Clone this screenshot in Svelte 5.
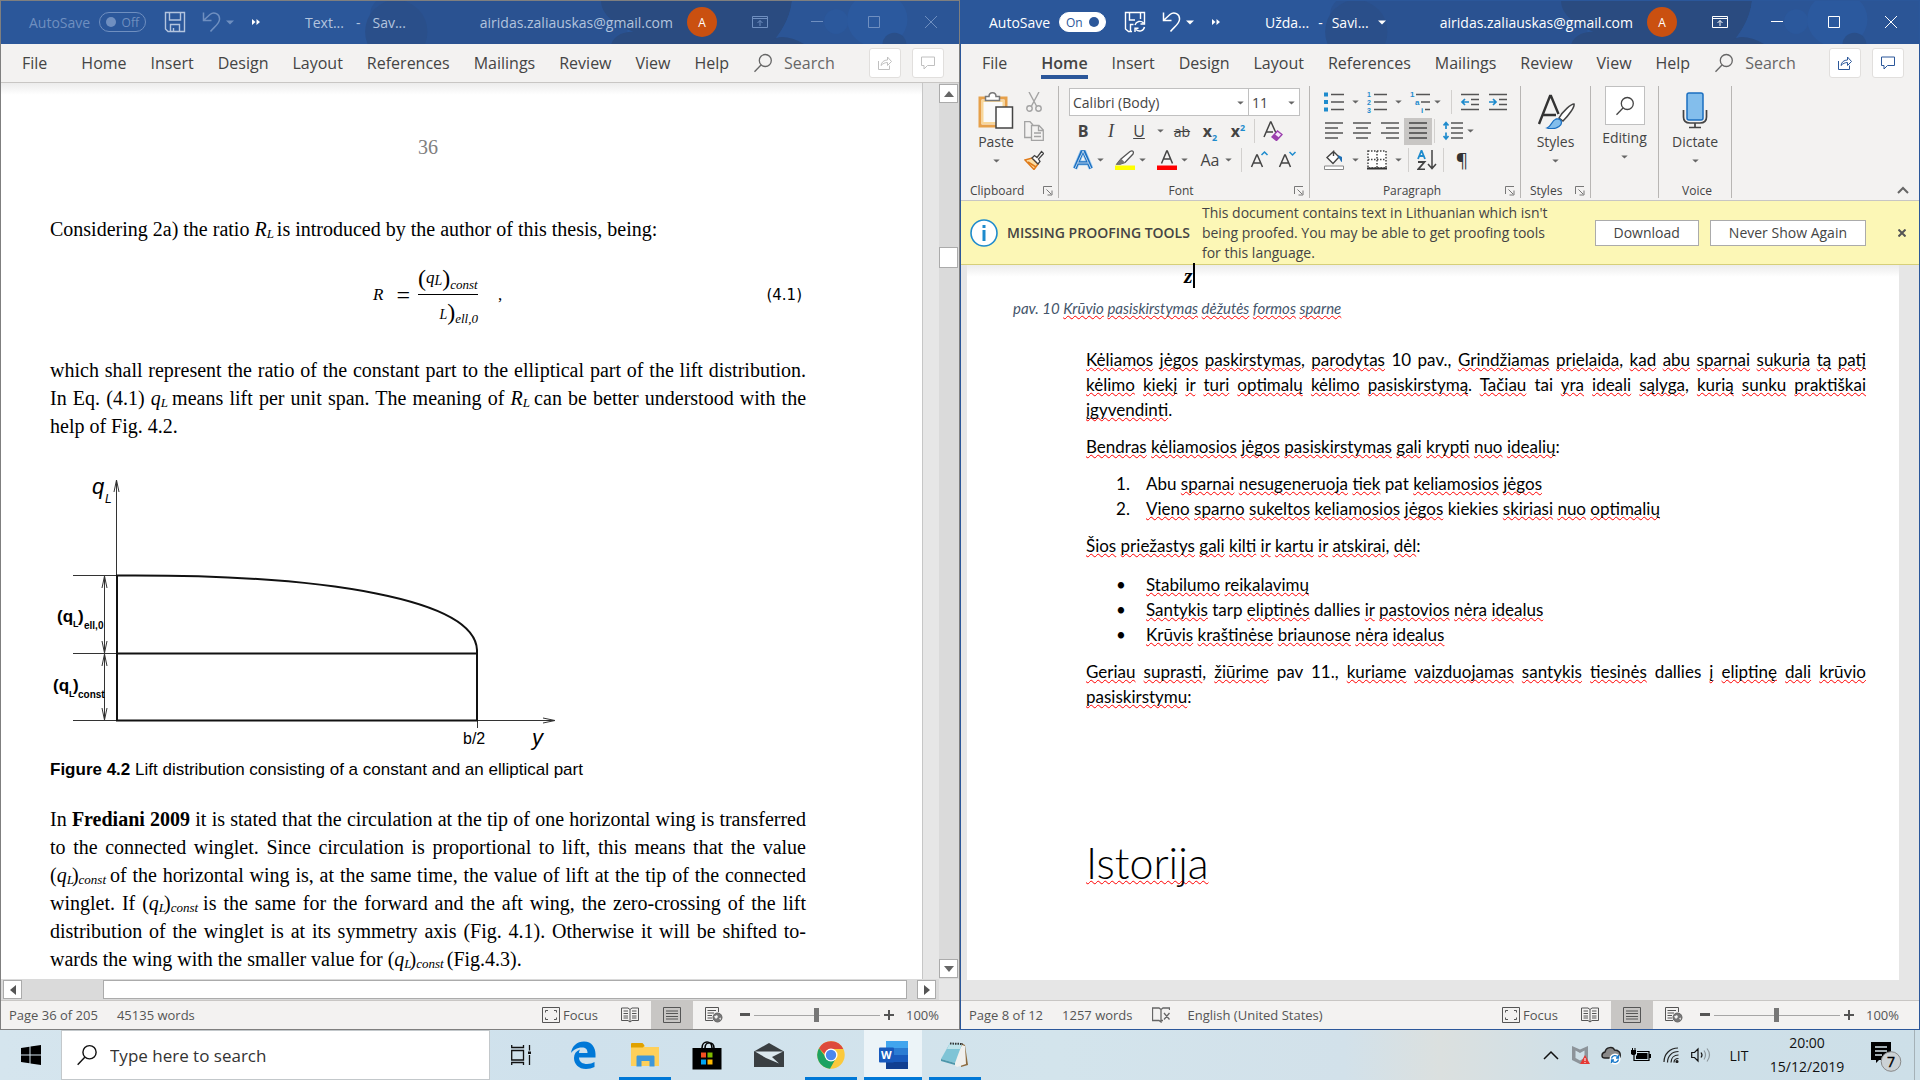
<script>
  const tabs = ['File', 'Home', 'Insert', 'Design', 'Layout', 'References', 'Mailings', 'Review', 'View', 'Help'];

  const intro = [
    '[Kėliamos] [jėgos] [paskirstymas], [parodytas] 10 pav., [Grindžiamas] [prielaida], [kad] [abu] [sparnai] [sukuria] [tą] [patį]',
    '[kėlimo] [kiekį] [ir] [turi] [optimalų] [kėlimo] [pasiskirstymą]. [Tačiau] tai [yra] [ideali] [sąlyga], [kurią] [sunku] [praktiškai]',
    '[įgyvendinti].'
  ];
  const numbered = [
    'Abu [sparnai] [nesugeneruoja] [tiek] pat [keliamosios] [jėgos]',
    '[Vieno] [sparno] [sukeltos] [keliamosios] [jėgos] kiekies [skiriasi] [nuo] [optimalių]'
  ];
  const bullets = [
    '[Stabilumo] [reikalavimų]',
    '[Santykis] tarp [eliptinės] dallies [ir] [pastovios] [nėra] [idealus]',
    '[Krūvis] [kraštinėse] [briaunose] [nėra] [idealus]'
  ];
  const closing = [
    '[Geriau] [suprasti], [žiūrime] pav 11., [kuriame] [vaizduojamas] [santykis] [tiesinės] dallies [į] [eliptinę] [dali] [krūvio]',
    '[pasiskirstymu]:'
  ];

  let leftZoom = $state(50);
  let rightZoom = $state(50);
</script>

{#snippet marked(text)}{#each text.split(/[\[\]]/) as part, i}{#if i % 2}<span class="err">{part}</span>{:else}{part}{/if}{/each}{/snippet}

{#snippet caret()}<svg class="caret" viewBox="0 0 8 5" width="8" height="5" aria-hidden="true"><path d="M0 0.5h8L4 4.5z" fill="currentColor" /></svg>{/snippet}

{#snippet lens(size)}<svg viewBox="0 0 20 20" width={size} height={size} aria-hidden="true"><circle cx="12.3" cy="7.5" r="6" fill="none" stroke="currentColor" stroke-width="1.3" /><path d="M8 12 1.5 18.8" stroke="currentColor" stroke-width="1.3" /></svg>{/snippet}

{#snippet titlebar(active, name, state)}
  <header class="title" class:idle={!active}>
    <svg class="art" viewBox="0 0 620 42" preserveAspectRatio="none" aria-hidden="true">
      <rect width="620" height="42" fill="#2b579a" />
      <path d="M40 0C70 -8 180 -8 290 0V42H60C30 25 30 10 40 0Z" fill="#2a5291" />
      <circle cx="60" cy="30" r="31" fill="#2a4f8a" />
      <path d="M264 0H454C452 18 442 32 434 42H274C278 32 288 30 296 30 280 24 264 14 264 0Z" fill="#2a4b80" />
      <path d="M430 42C440 30 456 36 466 40L466 42Z" fill="#2a4b80" />
      <path d="M454 0H620V42H466C456 36 446 34 438 36 446 26 453 14 454 0Z" fill="#2b5596" />
      <circle cx="498" cy="20" r="12" fill="#2b589c" />
      <ellipse cx="539" cy="18" rx="30" ry="27" fill="#2b599e" />
      <circle cx="556" cy="43" r="12" fill="#2a4f89" />
    </svg>
    <span class="autosave">AutoSave</span>
    <button class="toggle" class:on={active} aria-label="AutoSave">
      {#if active}<span>On</span><i></i>{:else}<i></i><span>Off</span>{/if}
    </button>
    <button class="save" aria-label="Save">
      {#if active}
        <svg viewBox="0 0 22 22" width="22" height="22"><path d="M8 20.5H4.5L1.500 18V1.500H20.500V9M5.500 1.500V9H11M16.500 1.500V8M6.500 20V13.500H9.500" fill="none" stroke="currentColor" stroke-width="1.400" /><path d="M11 14A5 5 0 0 1 19.500 12M20.500 9V13H16.500M20.500 16A5 5 0 0 1 12 18.500M11 21V17.300H14.500" fill="none" stroke="currentColor" stroke-width="1.400" /></svg>
      {:else}
        <svg viewBox="0 0 22 22" width="22" height="22"><path d="M1.500 1.500H20.500V20.500H4L1.500 18ZM5.500 1.500V9H16.500V1.500M6.500 20.500V13.500H15.500V20.500M9.500 17V20" fill="none" stroke="currentColor" stroke-width="1.400" /></svg>
      {/if}
    </button>
    <button class="undo" aria-label="Undo">
      <svg viewBox="0 0 20 22" width="20" height="22"><path d="M1.500 1.500V9.500H9.500M2 9 8 3.500C12 0 18 3 17.500 8.500 17.200 13 12 16 8.500 20.500" fill="none" stroke="currentColor" stroke-width="1.500" /></svg>
      {@render caret()}
    </button>
    <button class="more" aria-label="More commands">
      <svg viewBox="0 0 8 6" width="8" height="6"><path d="M0 0 3.500 3 0 6ZM4.500 0 8 3 4.500 6Z" fill="#fff" /></svg>
    </button>
    <span class="docname"><span>{name}</span><span>-</span><span>{state}</span>{#if active}{@render caret()}{/if}</span>
    <span class="account">airidas.zaliauskas@gmail.com</span>
    <span class="avatar">A</span>
    <span class="controls">
      <button aria-label="Ribbon display options"><svg viewBox="0 0 16 12" width="16" height="12"><path d="M.5.5H15.500V11.500H.5ZM.5 2.500H15.500M8 10V4.500M5.500 7 8 4.500 10.500 7" fill="none" stroke="currentColor" /></svg></button>
      <button aria-label="Minimize"><svg viewBox="0 0 12 12" width="12" height="12"><path d="M0 5.500H12" stroke="currentColor" /></svg></button>
      <button aria-label="Maximize"><svg viewBox="0 0 12 12" width="12" height="12"><path d="M.5.5H11.500V11.500H.5Z" fill="none" stroke="currentColor" /></svg></button>
      <button aria-label="Close"><svg viewBox="0 0 12 12" width="12" height="12"><path d="M0 0 12 12M12 0 0 12" stroke="currentColor" /></svg></button>
    </span>
  </header>
{/snippet}

{#snippet tabrow(active)}
  <nav class="tabs" class:live={active}>
    {#each tabs as tab}
      <button class="tab" class:file={tab === 'File'} class:current={active && tab === 'Home'}>{tab}</button>
    {/each}
    <button class="find">{@render lens(20)}<span>Search</span></button>
    <button class="chip share" aria-label="Share"><svg viewBox="0 0 16 16" width="16" height="16"><path d="M1.500 6V14.500H12.500V10.500M4 10.500C4.500 7 7 5 10.500 5V2L14.500 6.500 10.500 10.500V7.500C8 7.500 6 8.500 4 10.500Z" fill="none" stroke="currentColor" /></svg></button>
    <button class="chip" aria-label="Comments"><svg viewBox="0 0 16 16" width="16" height="16"><path d="M1.500 2H14.500V10.500H7.500L4 14V10.500H1.500Z" fill="none" stroke="currentColor" /></svg></button>
  </nav>
{/snippet}

{#snippet viewbar(kind)}
  <div class="views">
    <button class="focus"><svg viewBox="0 0 18 16" width="18" height="16"><path d="M.5.5H17.500V15.500H.5Z" fill="none" stroke="currentColor" /><path d="M3.500 5.500V3.500H6M12 3.500H14.500V5.500M14.500 10.500V12.500H12M6 12.500H3.500V10.500" fill="none" stroke="currentColor" /></svg>Focus</button>
    <button class="view" aria-label="Read mode"><svg viewBox="0 0 18 16" width="18" height="16"><path d="M9 2.500 7 1H.5V13.500H7L9 15 11 13.500H17.500V1H11L9 2.500V15M2.500 4H7M2.500 6.500H7M2.500 9H7M2.500 11H7M11 4H15.500M11 6.500H15.500M11 9H15.500M11 11H15.500" fill="none" stroke="currentColor" /></svg></button>
    <button class="view picked" aria-label="Print layout"><svg viewBox="0 0 18 16" width="18" height="16"><path d="M.5.5H17.500V15.500H.5ZM3 4H15M3 6.500H15M3 9.500H15M3 12H15" fill="none" stroke="currentColor" /></svg></button>
    <button class="view" aria-label="Web layout"><svg viewBox="0 0 18 16" width="18" height="16"><path d="M8 13.500H.5V.5H13.500V5M2.500 3.500H11M2.500 6H9M2.500 8.500H7M2.500 11H7" fill="none" stroke="currentColor" /><circle cx="12.500" cy="10.500" r="4.500" fill="#777" stroke="#666" /><path d="M9 9.500 12 8 13 10 11 12ZM14 11.500 16 10.500 15.500 13Z" fill="#f3f2f1" /></svg></button>
    <button class="step" aria-label="Zoom out"><svg viewBox="0 0 10 10" width="10" height="10"><path d="M0 4.500H10" stroke="currentColor" stroke-width="3" /></svg></button>
    {#if kind === 'left'}
      <input type="range" aria-label="Zoom" bind:value={leftZoom} />
    {:else}
      <input type="range" aria-label="Zoom" bind:value={rightZoom} />
    {/if}
    <button class="step" aria-label="Zoom in"><svg viewBox="0 0 10 10" width="10" height="10"><path d="M0 5H10M5 0V10" stroke="currentColor" stroke-width="2" /></svg></button>
    <span class="percent">100%</span>
  </div>
{/snippet}

{#snippet launcher(label)}<button class="launch" aria-label={label}><svg viewBox="0 0 10 10" width="10" height="10"><path d="M.5 8V.5H9M3.500 3.500 8 8M9 4.500V9H4.500" fill="none" stroke="currentColor" /></svg></button>{/snippet}

<div class="desktop">
  <div class="windows">
    <section class="window back" aria-label="Thesis document">
      {@render titlebar(false, 'Text...', 'Sav...')}
      {@render tabrow(false)}
      <div class="canvas">
        <article class="thesis">
          <p class="folio">36</p>
          <p class="opening">Considering 2a) the ratio <i>R<sub>L</sub></i> is introduced by the author of this thesis, being:</p>
          <div class="formula">
            <span class="lhs"><i>R</i><span>=</span></span>
            <span class="fraction">
              <span class="top"><b>(</b><i>q</i><small>L</small><b>)</b><small class="low">const</small></span>
              <span class="bottom"><small>L</small><b>)</b><small class="low">ell,0</small></span>
            </span>
            <span class="comma">,</span>
            <span class="eqno">(4.1)</span>
          </div>
          <p class="set follow">
            <span>which shall represent the ratio of the constant part to the elliptical part of the lift distribution.</span>
            <span>In Eq. (4.1) <i>q<sub>L</sub></i> means lift per unit span. The meaning of <i>R<sub>L</sub></i> can be better understood with the</span>
            <span class="end">help of Fig. 4.2.</span>
          </p>
          <svg class="plot" viewBox="50 470 520 280" width="520" height="280" role="img" aria-label="Lift distribution">
            <g fill="none" stroke="#333" stroke-width="1">
              <path d="M116.500 576V480M114 492 116.500 480 119 492M73 575.500H117M73 653.500H117M73 720.500H117M477 720.500H554M543 718 555 720.500 543 723M477.500 720V728" />
              <path d="M104.500 576V720M102 588 104.500 576 107 588M102 641 104.500 653 107 641M102 666 104.500 654 107 666M102 708 104.500 720 107 708" />
            </g>
            <path d="M117 575.500V720.500H477V650C475 600 330 574 117 575.500ZM117 653.500H477" fill="none" stroke="#111" stroke-width="2" />
            <g class="plottext">
              <text x="92" y="494" font-size="22" font-style="italic">q</text>
              <text x="105" y="503" font-size="12" font-style="italic">L</text>
              <text x="532" y="745" font-size="22" font-style="italic">y</text>
              <text x="463" y="744" font-size="16">b/2</text>
              <g font-weight="bold">
                <text x="57" y="622" font-size="17">(q</text><text x="73" y="627" font-size="9">L</text><text x="78" y="622" font-size="17">)</text><text x="84" y="629" font-size="10">ell,0</text>
                <text x="53" y="691" font-size="17">(q</text><text x="69" y="697" font-size="9">L</text><text x="73" y="691" font-size="17">)</text><text x="78" y="698" font-size="10">const</text>
              </g>
            </g>
          </svg>
          <p class="legend"><b>Figure 4.2</b> Lift distribution consisting of a constant and an elliptical part</p>
          <p class="set">
            <span>In <b>Frediani 2009</b> it is stated that the circulation at the tip of one horizontal wing is transferred</span>
            <span>to the connected winglet. Since circulation is proportional to lift, this means that the value</span>
            <span>(<i>q<sub>L</sub></i>)<i><sub>const</sub></i> of the horizontal wing is, at the same time, the value of lift at the tip of the connected</span>
            <span>winglet. If (<i>q<sub>L</sub></i>)<i><sub>const</sub></i> is the same for the forward and the aft wing, the zero-crossing of the lift</span>
            <span>distribution of the winglet is at its symmetry axis (Fig. 4.1). Otherwise it will be shifted to-</span>
            <span class="end">wards the wing with the smaller value for (<i>q<sub>L</sub></i>)<i><sub>const</sub></i> (Fig.4.3).</span>
          </p>
        </article>
        <div class="vscroll">
          <button aria-label="Scroll up"><svg viewBox="0 0 10 6" width="10" height="6"><path d="M0 6 5 0 10 6Z" fill="#666" /></svg></button>
          <span class="knob"></span>
          <button aria-label="Scroll down"><svg viewBox="0 0 10 6" width="10" height="6"><path d="M0 0 5 6 10 0Z" fill="#666" /></svg></button>
        </div>
      </div>
      <div class="hscroll">
        <button aria-label="Scroll left"><svg viewBox="0 0 6 10" width="6" height="10"><path d="M6 0 0 5 6 10Z" fill="#555" /></svg></button>
        <span class="knob"></span>
        <button aria-label="Scroll right"><svg viewBox="0 0 6 10" width="6" height="10"><path d="M0 0 6 5 0 10Z" fill="#555" /></svg></button>
      </div>
      <footer class="status"><span>Page 36 of 205</span><span>45135 words</span>{@render viewbar('left')}</footer>
    </section>

    <section class="window front" aria-label="Translation document">
      {@render titlebar(true, 'Užda...', 'Savi...')}
      {@render tabrow(true)}
      <div class="ribbon">
        <div class="group clipboard">
          <div class="tools">
            <button class="big"><svg viewBox="0 0 36 38" width="36" height="38"><path d="M2 7H28V35H2Z" fill="#fff" stroke="#e6a04a" stroke-width="3" /><path d="M4.500 10H25.500V32H4.500Z" fill="#fafafa" stroke="#f8d79a" stroke-width="2" /><path d="M7.500 9.500V5.500H11C11 .5 18 .5 18 5.500H21.500V9.500Z" fill="#fff" stroke="#777" stroke-width="1.500" /><path d="M18 16H34.500V37H18Z" fill="#fff" stroke="#444" stroke-width="1.500" /></svg><span>Paste</span>{@render caret()}</button>
            <div class="stack">
              <button aria-label="Cut"><svg viewBox="0 0 20 20" width="20" height="20" fill="none" stroke="#a3a3a3" stroke-width="1.400"><path d="M5 0 12.500 14M15 0 7.500 14" /><circle cx="5.500" cy="16.500" r="2.700" /><circle cx="14.500" cy="16.500" r="2.700" /></svg></button>
              <button aria-label="Copy"><svg viewBox="0 0 20 20" width="20" height="20" fill="none" stroke="#a3a3a3" stroke-width="1.300"><path d="M7 16.500H.7V.7H6L9 4" /><path d="M7.500 4.500H15L19.300 9V19.300H7.500ZM14.500 4.500V9.500H19M10 12H17M10 15.500H17" /></svg></button>
              <button aria-label="Format painter"><svg viewBox="0 0 20 20" width="20" height="20"><path d="M1 10 8 8 14 14 10 19.500Z" fill="#fbdfa8" stroke="#e07b1a" stroke-width="1.500" /><path d="M4 12 12 17" stroke="#e07b1a" stroke-width="1.500" /><path d="M8 8 10.500 5.500 13 7.500 17.500 1.500 19.500 3.500 14.500 9 16 11.500 14 14Z" fill="#fff" stroke="#444" stroke-width="1.300" /></svg></button>
            </div>
          </div>
          <div class="caption"><span>Clipboard</span>{@render launcher('Clipboard options')}</div>
        </div>

        <div class="group font">
          <div class="rows">
            <div class="row combos">
              <label class="combo family"><select aria-label="Font"><option>Calibri (Body)</option></select>{@render caret()}</label>
              <label class="combo size"><select aria-label="Font size"><option>11</option></select>{@render caret()}</label>
            </div>
            <div class="row">
              <button class="ic bold">B</button><button class="ic ital">I</button><button class="ic under">U</button><button class="dd mid" aria-label="Underline styles">{@render caret()}</button>
              <button class="ic strike">ab</button><button class="ic script"><span>x<sub>2</sub></span></button><button class="ic script"><span>x<sup>2</sup></span></button><i class="sep"></i>
              <button class="ic" aria-label="Clear formatting"><svg viewBox="0 0 20 20" width="20" height="20"><path d="M1 16 7.500 1H8L13 12M3 11H10" fill="none" stroke="#444" stroke-width="1.500" /><path d="M9 16 14.500 10 19 13.500 13.500 19.500Z" fill="#f5e6fa" stroke="#9b3fae" stroke-width="1.400" /><path d="M9 16 11.500 13 16 16.500 13.500 19.500Z" fill="#9b3fae" /></svg></button>
            </div>
            <div class="row effects">
              <button class="ic" aria-label="Text effects"><svg viewBox="0 0 20 20" width="20" height="20"><path d="M2 18.500 9 2H11L18 18.500M5 13H15" fill="none" stroke="#a6d0f2" stroke-width="5" /><path d="M2 18.500 9 2H11L18 18.500M5 13H15" fill="none" stroke="#1b6fc0" stroke-width="3.400" /><path d="M2 18.500 10 1 18 18.500M5 13H15" fill="none" stroke="#fff" stroke-width="0.700" /></svg></button><button class="dd" aria-label="Text effect options">{@render caret()}</button>
              <button class="ic" aria-label="Highlight"><svg viewBox="0 0 20 20" width="20" height="20"><path d="M2 14 6 9 15 1.500C18 0 19 2 18 4L10 12.500 5 14Z" fill="#fff" stroke="#555" stroke-width="1.300" /><path d="M2 14 6 8.500 10 12.500 5 14.500Z" fill="#777" /><path d="M0 15.500H20V20H0Z" fill="#ff0" /></svg></button><button class="dd" aria-label="Highlight colours">{@render caret()}</button>
              <button class="ic" aria-label="Font colour"><svg viewBox="0 0 20 20" width="20" height="20"><path d="M4.500 13.500 9.700 1H10.300L15.500 13.500M6.500 9H13.500" fill="none" stroke="#444" stroke-width="1.500" /><path d="M0 15.500H20V20H0Z" fill="#f00" /></svg></button><button class="dd" aria-label="Font colours">{@render caret()}</button>
              <button class="ic case">Aa</button><button class="dd" aria-label="Change case">{@render caret()}</button><i class="sep"></i>
              <button class="ic" aria-label="Grow font"><svg viewBox="0 0 20 20" width="20" height="20" fill="none"><path d="M1.500 17 6.700 5H7.300L12.500 17M3.500 13H10.500" stroke="#444" stroke-width="1.500" /><path d="M11.500 5 14.500 2 17.500 5" stroke="#1e8bcd" stroke-width="1.500" /></svg></button>
              <button class="ic" aria-label="Shrink font"><svg viewBox="0 0 20 20" width="20" height="20" fill="none"><path d="M1.500 17 6.700 5H7.300L12.500 17M3.500 13H10.500" stroke="#444" stroke-width="1.500" /><path d="M11.500 2 14.500 5 17.500 2" stroke="#1e8bcd" stroke-width="1.500" /></svg></button>
            </div>
          </div>
          <div class="caption"><span class="mid">Font</span>{@render launcher('Font options')}</div>
        </div>

        <div class="group para">
          <div class="rows">
            <div class="row">
              <button class="ic" aria-label="Bullets"><svg viewBox="0 0 20 20" width="20" height="20"><path d="M0 .5H4V4.500H0ZM0 8H4V12H0ZM0 15.500H4V19.500H0Z" fill="#1e8bcd" /><path d="M7 2.500H20M7 10H20M7 17.500H20" stroke="#555" stroke-width="1.500" /></svg></button><button class="dd mid" aria-label="Bullet library">{@render caret()}</button>
              <button class="ic" aria-label="Numbering"><svg class="digits" viewBox="0 0 20 20" width="20" height="20"><g font-size="7" font-weight="bold" fill="#1e8bcd"><text x="0" y="5">1</text><text x="0" y="13">2</text><text x="0" y="21">3</text></g><path d="M7 2.500H20M7 10H20M7 17.500H20" stroke="#555" stroke-width="1.500" /></svg></button><button class="dd mid" aria-label="Numbering library">{@render caret()}</button>
              <button class="ic" aria-label="Multilevel list"><svg class="digits" viewBox="0 0 20 20" width="20" height="20"><g font-size="8" font-weight="bold" fill="#1e8bcd"><text x="0" y="5">1</text><text x="5" y="13">a</text><text x="11" y="21">i</text></g><path d="M6 2.500H20M11 10H20M15 17.500H20" stroke="#555" stroke-width="1.500" /></svg></button><button class="dd" aria-label="Multilevel list library">{@render caret()}</button><i class="sep"></i>
              <button class="ic" aria-label="Decrease indent"><svg viewBox="0 0 20 20" width="20" height="20"><path d="M1 2.500H19M11 7.500H19M11 12.500H19M1 17.500H19" stroke="#555" stroke-width="1.500" /><path d="M9 10H2M5 7 2 10 5 13" fill="none" stroke="#1e8bcd" stroke-width="1.700" /></svg></button>
              <button class="ic" aria-label="Increase indent"><svg viewBox="0 0 20 20" width="20" height="20"><path d="M1 2.500H19M11 7.500H19M11 12.500H19M1 17.500H19" stroke="#555" stroke-width="1.500" /><path d="M1 10H8M5 7 8 10 5 13" fill="none" stroke="#1e8bcd" stroke-width="1.700" /></svg></button>
            </div>
            <div class="row">
              <button class="ic" aria-label="Align left"><svg viewBox="0 0 20 20" width="20" height="20"><path d="M1 2H19M1 7H14M1 12H19M1 17H14" stroke="#555" stroke-width="1.500" /></svg></button>
              <button class="ic" aria-label="Centre"><svg viewBox="0 0 20 20" width="20" height="20"><path d="M1 2H19M4 7H16M1 12H19M4 17H16" stroke="#555" stroke-width="1.500" /></svg></button>
              <button class="ic" aria-label="Align right"><svg viewBox="0 0 20 20" width="20" height="20"><path d="M1 2H19M6 7H19M1 12H19M6 17H19" stroke="#555" stroke-width="1.500" /></svg></button>
              <button class="ic picked" aria-label="Justify"><svg viewBox="0 0 20 20" width="20" height="20"><path d="M1 2H19M1 7H19M1 12H19M1 17H19" stroke="#444" stroke-width="1.500" /></svg></button><i class="sep"></i>
              <button class="ic" aria-label="Line spacing"><svg viewBox="0 0 20 20" width="20" height="20"><path d="M8 2H20M8 7H20M8 12H20M8 17H20" stroke="#555" stroke-width="1.500" /><path d="M3 2V8M.5 4.500 3 1.500 5.500 4.500M3 11.500V17.500M.5 15 3 18 5.500 15" fill="none" stroke="#1e8bcd" stroke-width="1.700" /></svg></button><button class="dd" aria-label="Spacing options">{@render caret()}</button>
            </div>
            <div class="row">
              <button class="ic" aria-label="Shading"><svg viewBox="0 0 20 20" width="20" height="20"><path d="M9 1 15 7 9 13.500 3 7.500 9.500 1.500V6" fill="#fff" stroke="#444" stroke-width="1.400" /><path d="M14 5 18 7V12C16.500 12 16.500 9 14.500 8Z" fill="#1e6fb5" /><path d="M.5 16H19.500V19.500H.5Z" fill="#fff" stroke="#888" /></svg></button><button class="dd mid" aria-label="Shading colours">{@render caret()}</button>
              <button class="ic" aria-label="Borders"><svg viewBox="0 0 20 20" width="20" height="20"><path d="M1 1H19V18H1ZM10 1V18M1 9.500H19" fill="#fff" stroke="#444" stroke-width="1.500" stroke-dasharray="1.500 1.500" /><path d="M0 18.500H20" stroke="#333" stroke-width="2" /></svg></button><button class="dd mid" aria-label="Border options">{@render caret()}</button><i class="sep"></i>
              <button class="ic" aria-label="Sort"><svg viewBox="0 0 20 20" width="20" height="20" fill="none" stroke-width="1.800"><path d="M1 9 4.500 .5 8 9M2.500 6H6.500" stroke="#1e8bcd" /><path d="M1 12H7.500L1 19.500H8" stroke="#444" /><path d="M15 0V18M11 14 15 18.500 19 14" stroke="#444" stroke-width="1.500" /></svg></button><i class="sep"></i>
              <button class="ic pilcrow">¶</button>
            </div>
          </div>
          <div class="caption"><span class="mid">Paragraph</span>{@render launcher('Paragraph options')}</div>
        </div>

        <div class="group styles">
          <div class="tools">
            <button class="big"><svg viewBox="0 0 38 38" width="38" height="38"><path d="M2 33 13 5H14L21.500 23M6 24H19" fill="none" stroke="#333" stroke-width="2.400" /><path d="M22 27C26 20 34 13 37 13 38 16 31 25 26 30Z" fill="#fff" stroke="#444" stroke-width="1.500" /><path d="M10 37C15 35 14 30 19 28 25 27 26 33 22 35.500 18 38 13 38 10 37Z" fill="#83beec" stroke="#1b6fc0" stroke-width="1.300" /></svg><span>Styles</span>{@render caret()}</button>
          </div>
          <div class="caption"><span>Styles</span>{@render launcher('Styles options')}</div>
        </div>

        <div class="group editing">
          <div class="tools">
            <button class="big"><span class="tile">{@render lens(20)}</span><span>Editing</span>{@render caret()}</button>
          </div>
        </div>

        <div class="group voice">
          <div class="tools">
            <button class="big"><svg viewBox="0 0 26 38" width="26" height="38"><rect x="5" y="2" width="16" height="27" rx="2" fill="#83beec" stroke="#1b6fc0" stroke-width="1.500" /><path d="M1.500 19V26C1.500 30 4 32 8 32H18C22 32 24.500 30 24.500 26V19M13 32V36M7 36.500H19" fill="none" stroke="#444" stroke-width="1.700" /></svg><span>Dictate</span>{@render caret()}</button>
          </div>
          <div class="caption"><span class="mid">Voice</span></div>
        </div>
        <button class="collapse" aria-label="Collapse ribbon"><svg viewBox="0 0 12 8" width="12" height="8"><path d="M1 7 6 2 11 7" fill="none" stroke="#666" stroke-width="2" /></svg></button>
      </div>

      <div class="notice" role="status">
        <svg viewBox="0 0 28 28" width="28" height="28" aria-hidden="true"><circle cx="14" cy="14" r="13" fill="#fff" stroke="#1e8bcd" stroke-width="1.600" /><path d="M12.500 6H15.500V9H12.500ZM12.500 11H15.500V22H12.500Z" fill="#1e8bcd" /></svg>
        <strong>MISSING PROOFING TOOLS</strong>
        <span class="detail">This document contains text in Lithuanian which isn't being proofed. You may be able to get proofing tools for this language.</span>
        <button class="act">Download</button>
        <button class="act">Never Show Again</button>
        <button class="dismiss" aria-label="Dismiss"><svg viewBox="0 0 8 8" width="8" height="8"><path d="M.5.5 7.500 7.500M7.500.5.5 7.500" stroke="#555" stroke-width="2" /></svg></button>
      </div>

      <div class="canvas">
        <article class="essay">
          <p class="axis"><span>z</span></p>
          <p class="figcap">{@render marked('pav. 10 [Krūvio] [pasiskirstymas] [dėžutės] [formos] [sparne]')}</p>
          <div class="copy">
            <p class="spread">{#each intro as line, i}<span class:end={i === intro.length - 1}>{@render marked(line)}</span>{/each}</p>
            <p>{@render marked('[Bendras] [kėliamosios] [jėgos] [pasiskirstymas] [gali] [krypti] [nuo] [idealių]:')}</p>
            <ol>{#each numbered as line}<li><span class="item">{@render marked(line)}</span></li>{/each}</ol>
            <p>{@render marked('[Šios] [priežastys] [gali] [kilti] [ir] [kartu] [ir] [atskirai], [dėl]:')}</p>
            <ul>{#each bullets as line}<li><span class="item">{@render marked(line)}</span></li>{/each}</ul>
            <p class="spread">{#each closing as line, i}<span class:end={i === closing.length - 1}>{@render marked(line)}</span>{/each}</p>
            <h1>{@render marked('[Istorija]')}</h1>
          </div>
        </article>
      </div>
      <footer class="status">
        <span>Page 8 of 12</span><span>1257 words</span>
        <button class="proof" aria-label="Proofing errors"><svg viewBox="0 0 18 16" width="18" height="16"><path d="M9 2.500 7 1H.5V13.500H7L9 15V2.500L11 1H17.500V3M11 13.500H9M12 6 17.500 12.500M17.500 6 12 12.500" fill="none" stroke="#666" stroke-width="1.300" /></svg></button>
        <span>English (United States)</span>
        {@render viewbar('right')}
      </footer>
    </section>
  </div>

  <div class="taskbar">
    <button class="start" aria-label="Start"><svg viewBox="0 0 20 20" width="20" height="20"><path d="M0 3 8.500 1.800V9.500H0ZM9.500 1.600 20 0V9.500H9.500ZM0 10.500H8.500V18.200L0 17ZM9.500 10.500H20V20L9.500 18.400Z" /></svg></button>
    <label class="query">{@render lens(22)}<input type="text" placeholder="Type here to search" aria-label="Search" /></label>
    <button class="app" aria-label="Task view"><svg viewBox="0 0 20 20" width="20" height="20" fill="none" stroke="#111" stroke-width="1.300"><path d="M.7 5.500H12.500V15H.7ZM.7 0V2.500H12.500V0M.7 20V17.500H12.500V20M18.500 0V5.500M18.500 10V20" /><path d="M17 6.500H20V9H17Z" fill="#111" stroke="none" /></svg></button>
    <button class="app" aria-label="Edge"><svg viewBox="0 0 26 28" width="26" height="28"><path d="M1 12C2 5 7 0.500 14 .5 22 .5 25.500 7 25.500 13V16.500H9C9 21 13 23 17 23 20 23 22.500 22 24.500 21V26C22 27.300 19 28 16 28 8.500 28 4 23 4 17 4 13 6 10 10 8.500 9.300 9.500 9 10.800 9 12H17.500C17.500 8 15.500 6.500 12 6.500 7 6.500 3 9 1 12Z" fill="#0078d7" /></svg></button>
    <button class="app open" aria-label="File Explorer"><svg viewBox="0 0 28 24" width="28" height="24"><path d="M0 1H12L14 4H28V23H0Z" fill="#ffd05a" /><path d="M0 1C0 .5 .5 0 1 0H11.500L13.500 2.500 12 4.500H0Z" fill="#e0a100" /><path d="M5.500 23.500V14C5.500 13 6 12.500 7 12.500H22C23 12.500 23.500 13 23.500 14V23.500H18.500V18H10.500V23.500Z" fill="#3f97d9" /></svg></button>
    <button class="app" aria-label="Store"><svg viewBox="0 0 30 30" width="30" height="30"><path d="M10 8C10 0 20 0 20 8M13 8C13 1 22 1 22 8" fill="none" stroke="#000" stroke-width="1.600" /><path d="M.5 8H29.500V29.500H.5Z" /><path d="M9 12.500H14V17.500H9Z" fill="#f25022" /><path d="M15.500 12.500H20.500V17.500H15.500Z" fill="#7fba00" /><path d="M9 19.500H14V24.500H9Z" fill="#00a4ef" /><path d="M15.500 19.500H20.500V24.500H15.500Z" fill="#ffb900" /></svg></button>
    <button class="app" aria-label="Mail"><svg viewBox="0 0 30 24" width="30" height="24"><path d="M0 8.500 15 0 30 8.500V24H0Z" fill="#3a3f42" /><path d="M1 8.500H29L18 14 25 20.500 12 15Z" fill="#dbe8ee" /></svg></button>
    <button class="app open" aria-label="Chrome"><svg viewBox="0 0 28 28" width="28" height="28"><circle cx="14" cy="14" r="13.700" fill="#fbc93c" /><path d="M2 7.200A13.700 13.700 0 0 1 26.300 8H14Q9 8 8.500 14Z" fill="#de4a3c" /><path d="M2 7.200A13.700 13.700 0 0 0 13 27.700L19 17 14 20Q9 19 8 15Z" fill="#1da261" /><circle cx="14" cy="14" r="6.500" fill="#fff" /><circle cx="14" cy="14" r="5.200" fill="#4b87ee" /></svg></button>
    <button class="app open word" aria-label="Word"><svg viewBox="0 0 29 28" width="29" height="28"><path d="M7 0H29V7H7Z" fill="#41a5ee" /><path d="M7 7H29V14H7Z" fill="#2b7cd3" /><path d="M7 14H29V21H7Z" fill="#185abd" /><path d="M7 21H29V28H7Z" fill="#103f91" /><rect y="6.500" width="15" height="15" rx="1" fill="#185abd" /><text x="2" y="18" font-size="11" font-weight="bold" fill="#fff">W</text></svg></button>
    <button class="app open" aria-label="Notepad"><svg viewBox="0 0 28 28" width="28" height="28"><path d="M20 2 24 4 27 24 20 26Z" fill="#8c6a3e" /><path d="M21 4 24 5 25 23 16 26 11 22Z" fill="#f0f0ee" /><path d="M9 2 21 3 14 22 0 18Z" fill="#7fc4d6" /><path d="M9 2 21 3 19 8 6 8Z" fill="#bfe3ea" /><path d="M0 18 14 22 14 24 0 20Z" fill="#4d97ab" /><path d="M9 2.500 22 3" stroke="#333" stroke-width="2" stroke-dasharray="1.500 1" /></svg></button>

    <div class="tray">
      <button aria-label="Hidden icons"><svg viewBox="0 0 16 10" width="16" height="10"><path d="M1 9 8 2 15 9" fill="none" stroke="#111" stroke-width="1.500" /></svg></button>
      <button aria-label="Security"><svg viewBox="0 0 20 20" width="20" height="20"><path d="M1 1 9 4.500 17 1V15L9 19 1 15ZM4.500 5.500V13L9 15.500 13.500 13V5.500L9 8Z" fill="#8d949a" fill-rule="evenodd" /><path d="M14 10 19 19H9Z" fill="#e53935" /><path d="M14 13V16M14 17V18" stroke="#fff" /></svg></button>
      <button aria-label="Cloud sync"><svg viewBox="0 0 20 20" width="20" height="20"><path d="M4 13C0 13 0 8 4 7 5 2 12 1 13.500 5 18 5 20 8 19 12L10 13Z" fill="#8a8a8a" stroke="#222" stroke-width="1.400" /><circle cx="14" cy="14" r="5.500" fill="#fff" /><path d="M10.500 13.500A3.500 3.500 0 0 1 17 12.500M17.500 10V13H15M17.500 14.500A3.500 3.500 0 0 1 11 15.500M10.500 18V15H13" fill="none" stroke="#1979ca" stroke-width="1.300" /></svg></button>
      <button aria-label="Battery"><svg viewBox="0 0 20 14" width="20" height="14"><path d="M3 7V12.500H18V3.500H6" fill="none" stroke="#000" stroke-width="1.200" /><path d="M6 5H16.500V11H5V8L6 7ZM18 6H20V10H18ZM0 2H5V6L3.500 7H1.500L0 6ZM1 0H2V2H1ZM3.500 0H4.500V2H3.500Z" /></svg></button>
      <button aria-label="Network"><svg viewBox="0 0 16 16" width="16" height="16" fill="none" stroke="#222" stroke-width="1.200"><path d="M1 15C1 7 7 1 15 1M4.500 15.500C4.500 9 9 4.500 15.500 4.500M8 15.500C8 11 11 8 15.500 8" /><path d="M11 15.500C11 13 13 11.500 15.500 11.500" /><circle cx="14" cy="14.500" r="1" fill="#000" /></svg></button>
      <button aria-label="Volume"><svg viewBox="0 0 20 16" width="20" height="16" fill="none" stroke="#111" stroke-width="1.200"><path d="M.7 5.500H3.500L7 2V14L3.500 10.500H.7ZM10 5.500Q12 8 10 10.500" /><path d="M13 3.500Q16 8 13 12.500M16 1.500Q21 8 16 14.500" stroke="#8d979c" /></svg></button>
      <button class="lang">LIT</button>
      <button class="clock"><span>20:00</span><span>15/12/2019</span></button>
      <button class="alerts" aria-label="Notifications"><svg viewBox="0 0 31 32" width="31" height="32"><path d="M0 1H20V19H8L5 22V19H0Z" /><path d="M4 6H16M4 10H16M4 14H11" stroke="#d6e5ec" stroke-width="1.500" /><circle cx="20" cy="20.500" r="9.800" fill="#ccd2d5" stroke="#888" /><text x="16" y="26" font-size="14" fill="#000" stroke="#000" stroke-width="0.400">7</text></svg></button>
    </div>
  </div>
</div>

<style>
  :global(body) { margin: 0; background: #d6e5ed; }
  :global(*) { box-sizing: border-box; }
  .desktop { display: flex; flex-direction: column; min-height: 100vh; min-width: 1600px; font-family: 'Open Sans', 'Noto Sans', sans-serif; font-size: 14px; color: #444; }
  button { display: flex; align-items: center; justify-content: center; padding: 0; border: 0; background: none; font: inherit; color: inherit; white-space: nowrap; }
  svg { display: block; flex: none; }
  p, h1, ol, ul { margin: 0; padding: 0; }

  .windows { flex: 1; display: grid; grid-template-columns: 1fr 1fr; }
  .window { display: flex; flex-direction: column; min-width: 0; border: 1px solid #7f7f7f; background: #e6e6e6; }
  .front { border-color: #2b579a; }

  .title { position: relative; display: flex; align-items: center; height: 43px; padding: 0 0 1px 28px; background: #2b579a; color: #fff; }
  .title > :not(.art) { position: relative; }
  .art { position: absolute; top: 0; right: 0; width: 65%; height: 100%; }
  .idle { color: #b3c4de; }
  .idle .autosave, .idle .toggle, .idle .undo, .idle .controls { color: #6f8fc0; }
  .autosave { width: 70px; }
  .toggle { width: 47px; height: 20px; padding: 0 6px; justify-content: space-between; border: 1px solid currentColor; border-radius: 10px; font-size: 12px; }
  .toggle i { width: 10px; height: 10px; border-radius: 50%; background: currentColor; }
  .toggle.on { border-color: #fff; background: #fff; color: #2b579a; }
  .save { width: 22px; margin-left: 18px; }
  .undo { gap: 4px; margin-left: 16px; }
  .more { margin-left: 18px; }
  .docname { display: flex; align-items: center; gap: 9px; margin-left: 45px; }
  .idle .docname { gap: 12px; }
  .account { margin-left: auto; }
  .avatar { display: grid; place-items: center; width: 30px; height: 30px; margin: 0 14px 0 14px; border-radius: 50%; background: #ca5010; color: #fff; font-size: 12px; }
  .controls { display: flex; }
  .controls button { width: 57px; height: 40px; }

  .tabs { display: flex; align-items: center; gap: 24px; height: 39px; padding: 0 15px 0 21px; border-bottom: 1px solid #c8c6c4; background: #f3f2f1; font-size: 16px; }
  .tabs.live { border-color: #f3f2f1; }
  .tab { height: 35px; align-self: flex-start; border-bottom: 4px solid transparent; padding-top: 6px; }
  .tab.file { margin-right: 10px; }
  .tab.current { border-color: #2b579a; font-weight: 600; }
  .find { gap: 11px; color: #666; }
  .chip { width: 32px; height: 30px; margin-left: -13px; border: 1px solid #e1dfdd; border-radius: 3px; background: #fff; color: #c0c0c0; }
  .chip.share { margin-left: auto; }
  .live .chip { color: #2b579a; }

  .ribbon { display: flex; height: 118px; padding-top: 3px; border-bottom: 1px solid #c8c6c4; background: #f3f2f1; }
  .group { display: flex; flex-direction: column; height: 112px; border-right: 1px solid #b8b6b4; }
  .tools { display: flex; }
  .big { flex-direction: column; justify-content: flex-start; }
  .big > svg:first-child { margin-top: 5px; }
  .big span { line-height: 20px; margin-top: 3px; }
  .big .caret { margin-top: 7px; }
  .big .tile { display: grid; place-items: center; width: 40px; height: 39px; margin-top: 0; border: 1px solid #c0c0c0; background: #fff; }
  .caret { width: 7px; height: 4px; color: #666; }
  .title .caret { width: 8px; height: 5px; color: inherit; }
  .caption { display: flex; align-items: center; justify-content: space-between; margin-top: auto; padding: 0 5px 0 9px; font-size: 12px; line-height: 14px; }
  .caption .mid { flex: 1; text-align: center; }
  .launch { color: #777; }
  .clipboard { width: 98px; }
  .clipboard .tools { padding-left: 17px; gap: 10px; }
  .stack { display: grid; gap: 9px; padding-top: 6px; align-content: start; }
  .font { width: 251px; }
  .para { width: 211px; }
  .styles { width: 70px; }
  .editing { width: 68px; }
  .voice { width: 73px; }
  .styles .tools, .editing .tools, .voice .tools { justify-content: center; }
  .rows { display: grid; gap: 1px; padding: 2px 0 0 10px; }
  .row { display: flex; align-items: center; height: 28px; }
  .combo { position: relative; display: flex; height: 28px; border: 1px solid #c0c0c0; background: #fff; }
  .combo select { width: 100%; padding: 0 3px; border: 0; background: none; appearance: none; font: inherit; color: #444; }
  .combo .caret { position: absolute; right: 4px; top: 12px; }
  .family { width: 180px; }
  .size { width: 52px; margin-left: -1px; }
  .ic { width: 28px; height: 27px; font-size: 16px; }
  .ic.picked { background: #c8c6c4; }
  .ic.case { width: 30px; }
  .dd { width: 15px; height: 27px; justify-content: flex-start; }
  .dd.mid { justify-content: center; }
  .effects .dd { width: 14px; }
  .sep { width: 1px; height: 24px; margin: 0 4px 0 2px; background: #d2d0ce; }
  .digits { overflow: visible; font-family: 'Liberation Sans', sans-serif; }
  .bold { font-weight: 700; }
  .ital { font: italic 18px 'Liberation Serif', serif; }
  .under { text-decoration: underline; }
  .strike { font-size: 14px; text-decoration: line-through; }
  .script { font-weight: 700; }
  .script sub, .script sup { font-size: 9px; line-height: 0; color: #1e8bcd; }
  .pilcrow { font-size: 19px; color: #333; }
  .collapse { align-self: flex-end; margin: 0 10px 6px auto; }

  .notice { display: flex; align-items: center; height: 64px; padding: 0 7px 0 9px; border-bottom: 1px solid #d6cf7a; background: #fcf7b6; }
  .notice strong { margin: 0 12px 0 9px; font-weight: 600; white-space: nowrap; }
  .detail { flex: 0 0 360px; line-height: 20px; }
  .act { height: 26px; margin-left: 11px; padding: 0 18px; border: 1px solid #ababab; background: #fff; }
  .detail + .act { margin-left: auto; }
  .dismiss { width: 20px; margin-left: 26px; }

  .canvas { flex: 1; display: flex; min-height: 0; }
  .thesis { flex: 1; margin-right: 16px; padding: 50px 116px 4px 49px; border-right: 1px solid #c6c6c6; background: linear-gradient(#ececec, #fff 12px); color: #000; font: 20px/28px 'Liberation Serif', serif; }
  .folio { color: #808080; text-align: center; }
  .opening { margin-top: 54px; }
  .set { margin-top: 21px; }
  .set.follow { margin-top: 26px; }
  .set span, .spread span:not(.err) { display: block; text-align: justify; text-align-last: justify; white-space: nowrap; }
  .set .end, .spread .end:not(.err) { text-align-last: left; }
  .thesis sub { margin-right: -2px; font-size: 13px; line-height: 0; vertical-align: -2px; }
  .formula { display: flex; align-items: center; height: 70px; margin-top: 17px; padding: 0 4px 0 323px; font-size: 17px; line-height: 20px; }
  .lhs { display: flex; gap: 13px; margin-right: 8px; }
  .lhs span { font-size: 24px; }
  .fraction { display: grid; width: 60px; }
  .top, .bottom { display: flex; align-items: center; height: 34px; font-style: italic; }
  .top { border-bottom: 1px solid #000; }
  .bottom { justify-content: flex-end; }
  .formula b { font-size: 24px; font-weight: 400; font-style: normal; }
  .formula small { padding-top: 6px; font-size: 14px; }
  .formula .low { padding-top: 14px; font-size: 13px; }
  .comma { margin-left: 20px; }
  .eqno { margin-left: auto; font: 15px/20px 'DejaVu Sans', sans-serif; }
  .plot { margin-top: 30px; max-width: 100%; }
  .plottext, .legend { font-family: 'Liberation Sans', sans-serif; }
  .legend { margin-top: 6px; font-size: 17px; }

  .vscroll { display: flex; flex-direction: column; width: 20px; padding: 1px 1px 1px 0; background: #dadada; }
  .vscroll button, .hscroll button { width: 19px; height: 19px; border: 1px solid #ababab; background: #fff; }
  .vscroll .knob { height: 21px; margin: 144px 0 auto; border: 1px solid #ababab; background: #fff; }
  .hscroll { display: flex; height: 21px; margin-right: 20px; padding: 1px 3px 1px 2px; background: #dadada; }
  .hscroll .knob { flex: 1; margin: 0 10px 0 81px; border: 1px solid #ababab; background: #fff; }

  .status { display: flex; align-items: center; height: 29px; padding-left: 8px; border-top: 1px solid #c8c6c4; background: #f3f2f1; font-size: 13px; color: #555; white-space: nowrap; }
  .status > span + span, .status > .proof { margin-left: 19px; }
  .proof + span { margin-left: 18px; }
  .views { display: flex; align-items: center; height: 100%; margin-left: auto; padding-right: 20px; }
  .focus { gap: 3px; margin-right: 11px; }
  .view { width: 42px; height: 100%; }
  .view.picked { background: #c8c6c4; }
  .step { margin: 0 2px 0 4px; }
  .view + .step { margin: 0 4px 0 5px; }
  .views input { width: 126px; height: 14px; margin: 0; appearance: none; background: linear-gradient(#a6a6a6, #a6a6a6) center / 100% 1px no-repeat; }
  .views input::-webkit-slider-thumb { appearance: none; width: 5px; height: 14px; background: #777; }
  .percent { margin-left: 10px; }

  .front .canvas { padding: 0 20px 20px 6px; }
  .essay { flex: 1; padding: 0 33px 0 46px; background: linear-gradient(#ececec, #fff 12px); color: #000; font: 17px/25px Lato, 'Open Sans', sans-serif; }
  .axis { height: 25px; padding-left: 171px; font: italic bold 22px/22px 'Liberation Serif', serif; }
  .axis span { border-right: 2px solid #000; }
  .figcap { margin-top: 6px; font-size: 15px; font-style: italic; color: #44546a; }
  .copy { margin-top: 26px; padding-left: 73px; }
  .copy > * + * { margin-top: 12px; }
  .copy ol, .copy ul { list-style: none; counter-reset: item; }
  .copy ul { margin-top: 14px; }
  .copy li { display: flex; padding-left: 30px; counter-increment: item; }
  .copy li::before { content: counter(item) '.'; flex: 0 0 30px; }
  .copy ul li::before { content: '•'; }
  .err { text-decoration: underline wavy #f00 1px; text-decoration-skip-ink: none; text-underline-offset: 1px; }
  .copy h1 { margin-top: 124px; font-size: 43px; line-height: 60px; font-weight: 300; }

  .taskbar { display: flex; align-items: stretch; height: 50px; background: linear-gradient(90deg, #d5e5ee, #cfe1ec 30%, #d3e4ec 55%, #d2e1ea 70%, #dbe0df 75%, #cfe0e8 82%, #cddfe8); color: #111; }
  .start { width: 61px; }
  .query { display: flex; align-items: center; gap: 10px; width: 429px; padding-left: 14px; border: 1px solid #c3c8cb; background: #fff; }
  .query input { flex: 1; border: 0; outline: 0; background: none; font: 17px 'Open Sans', sans-serif; }
  .query input::placeholder { color: #333; opacity: 1; }
  .app { width: 62px; border-top: 3px solid transparent; border-bottom: 3px solid transparent; }
  .open { width: 52px; margin: 0 5px; border-bottom-color: #0078d7; }
  .word { width: 58px; margin: 0 2px; border-top-color: #ecf4f8; background: #ecf4f8; }
  .tray { display: flex; align-items: center; margin: 0 5px 0 auto; border-right: 1px solid #a5b1b7; }
  .tray button { width: 30px; }
  .tray .lang { width: 46px; }
  .tray .clock { flex-direction: column; width: 90px; line-height: 24px; }
  .tray .alerts { width: 52px; height: 100%; margin-left: 10px; padding: 4px 4px 0 0; }
</style>
